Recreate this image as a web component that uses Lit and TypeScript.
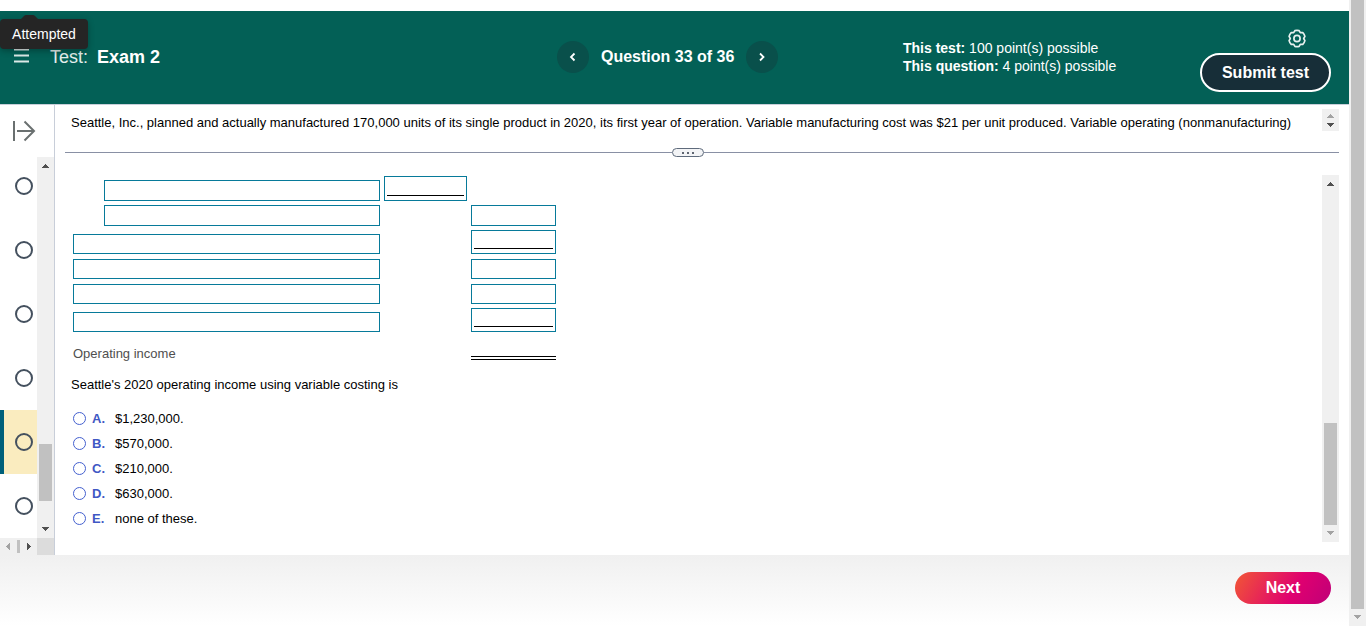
import { LitElement, html, css, svg } from "lit";
import { customElement, property, state } from "lit/decorators.js";
import { classMap } from "lit/directives/class-map.js";

const arrows: Record<string, string> = {
  up: "M1 7h7v-1h-1v-1h-1v-1h-1v-1h-1v1h-1v1h-1v1h-1z",
  down: "M1 2h7v1h-1v1h-1v1h-1v1h-1v-1h-1v-1h-1v-1h-1z",
  left: "M6 1v7h-1v-1h-1v-1h-1v-1h-1v-1h1v-1h1v-1h1v-1z",
  right: "M3 1v7h1v-1h1v-1h1v-1h1v-1h-1v-1h-1v-1h-1v-1z",
};

const arrow = (dir: string, dim = false) => html`
  <svg class=${dim ? "arrow dim" : "arrow"} width="9" height="9" viewBox="0 0 9 9" aria-hidden="true">
    ${svg`<path d=${arrows[dir]} fill="currentColor" shape-rendering="crispEdges" />`}
  </svg>
`;

/** Vertical scroll track: the thumb is placed by the shares of free space above and below it. */
@customElement("scroll-track")
class ScrollTrack extends LitElement {
  @property({ type: Number }) before = 0;
  @property({ type: Number }) thumb = 0;
  @property({ type: Number }) after = 0;
  @property({ type: Boolean }) atStart = false;
  @property({ type: Boolean }) atEnd = false;
  @property({ type: Boolean }) noStart = false;

  static styles = css`
    :host {
      display: flex;
      flex-direction: column;
      flex: none;
      width: 17px;
      background: #f0f0f0;
      color: #505050;
    }
    .cap {
      flex: none;
      height: 17px;
      display: flex;
      align-items: center;
      justify-content: center;
    }
    .rail {
      flex: 1;
      display: flex;
      flex-direction: column;
      min-height: 0;
    }
    .thumb {
      margin: 0 2px;
      background: #c1c1c1;
    }
    .dim {
      color: #a3a3a3;
    }
  `;

  render() {
    return html`
      ${this.noStart ? "" : html`<div class="cap">${arrow("up", this.atStart)}</div>`}
      <div class="rail">
        <div style="flex:${this.before}"></div>
        <div class="thumb" style="flex:${this.thumb}"></div>
        <div style="flex:${this.after}"></div>
      </div>
      <div class="cap">${arrow("down", this.atEnd)}</div>
    `;
  }
}

@customElement("app-root")
class AppRoot extends LitElement {
  @state() private current = 4;
  @state() private answer = "";

  private choices = [
    ["A", "$1,230,000."],
    ["B", "$570,000."],
    ["C", "$210,000."],
    ["D", "$630,000."],
    ["E", "none of these."],
  ];

  // indent: label box is inset; col: which amount column is filled; rule: amount ends in a subtotal line
  private rows = [
    { indent: true, col: 1, rule: true, h: "tall" },
    { indent: true, col: 2, rule: false, h: "mid" },
    { indent: false, col: 2, rule: true, h: "" },
    { indent: false, col: 2, rule: false, h: "" },
    { indent: false, col: 2, rule: false, h: "" },
    { indent: false, col: 2, rule: true, h: "" },
  ];

  static styles = css`
    :host {
      display: flex;
      height: 100vh;
      background: #fff;
      color: #000;
      font: 13px/18px "Liberation Sans", Arial, sans-serif;
    }
    * {
      box-sizing: border-box;
    }
    button {
      font: inherit;
      color: inherit;
      background: none;
      border: 0;
      padding: 0;
      cursor: pointer;
    }
    .page {
      flex: 1;
      min-width: 0;
      display: flex;
      flex-direction: column;
      padding-top: 11px;
    }

    .header {
      position: relative;
      flex: none;
      display: grid;
      grid-template-columns: 557fr 346fr 297fr 149fr;
      height: 94px;
      background: #036056;
      border-bottom: 1px solid #c8ced9;
      color: #fff;
      font-size: 14px;
      white-space: nowrap;
    }
    .title {
      display: flex;
      align-items: center;
      gap: 21px;
      padding-left: 14px;
      height: 91px;
      font-size: 18px;
    }
    .title h1 {
      margin: 0;
      font-size: 18px;
      font-weight: 400;
      display: flex;
      gap: 9px;
      color: #e4eeec;
    }
    .title strong {
      color: #fff;
    }
    .menu,
    .menu svg,
    .gear svg,
    .collapse svg {
      display: block;
    }
    .tip {
      position: absolute;
      left: 0;
      top: 8px;
      width: 88px;
      height: 30px;
      border-radius: 4px;
      background: #252525;
      text-align: center;
      font-size: 14px;
      line-height: 30px;
      box-shadow: 0 2px 6px rgba(0, 0, 0, 0.3);
    }
    .tip svg {
      position: absolute;
      left: 20px;
      top: -4px;
    }
    .nav {
      display: flex;
      align-items: center;
      gap: 12px;
      height: 91px;
      font-size: 16px;
      font-weight: 700;
    }
    .round {
      width: 32px;
      height: 32px;
      border-radius: 50%;
      background: #09504b;
      display: flex;
      align-items: center;
      justify-content: center;
    }
    .points {
      padding-top: 28px;
    }
    .points div {
      line-height: 18px;
    }
    .actions {
      display: flex;
      flex-direction: column;
      align-items: flex-end;
      gap: 5px;
      padding: 18px 18px 0 0;
    }
    .gear {
      margin-right: 24px;
    }
    .submit {
      width: 131px;
      height: 39px;
      border: 2px solid #fff;
      border-radius: 20px;
      background: #172e38;
      font-size: 16px;
      font-weight: 700;
    }

    .main {
      flex: 1;
      min-height: 0;
      display: flex;
    }
    .side {
      flex: none;
      width: 55px;
      display: flex;
      flex-direction: column;
      border-right: 1px solid #c8ced9;
    }
    .collapse {
      flex: none;
      height: 52px;
      padding-left: 12px;
      text-align: left;
    }
    .list {
      flex: 1;
      min-height: 0;
      display: flex;
    }
    .items {
      flex: 1;
      display: flex;
      flex-direction: column;
      justify-content: flex-end;
      overflow: hidden;
    }
    .item {
      flex: none;
      height: 64px;
      display: flex;
      align-items: center;
      justify-content: flex-end;
      padding-right: 4px;
    }
    .item.on {
      background: #faecbf;
      border-left: 4px solid #00607a;
    }
    .dot {
      width: 18px;
      height: 18px;
      border: 2px solid #44505e;
      border-radius: 50%;
    }
    .hbar {
      flex: none;
      display: flex;
      height: 17px;
      background: #dcdcdc;
      color: #505050;
    }
    .hrail {
      width: 37px;
      display: flex;
      align-items: center;
      justify-content: space-between;
      padding: 0 4px;
      background: #f0f0f0;
    }
    .hthumb {
      width: 3px;
      height: 13px;
      background: #c1c1c1;
    }
    .dim {
      color: #a3a3a3;
    }

    .content {
      flex: 1;
      min-width: 0;
      display: flex;
      flex-direction: column;
      padding: 4px 10px 13px;
    }
    .stem {
      flex: none;
      display: flex;
      justify-content: space-between;
      height: 39px;
      padding-left: 6px;
    }
    .stem p {
      margin: 5px 0 0;
      height: 18px;
      overflow: hidden;
    }
    .spin {
      flex: none;
      width: 17px;
      height: 22px;
      display: flex;
      flex-direction: column;
      align-items: center;
      justify-content: center;
      gap: 1px;
      background: #f0f0f0;
      color: #505050;
    }
    .split {
      flex: none;
      display: flex;
      align-items: center;
      height: 9px;
    }
    .line {
      height: 1px;
      background: #8990a4;
      flex: 22;
    }
    .line.rest {
      flex: 23;
    }
    .grip {
      width: 32px;
      height: 9px;
      border: 1px solid #5f6b7c;
      border-radius: 5px;
      background: #f3f4f6;
      display: flex;
      align-items: center;
      justify-content: center;
      gap: 3px;
    }
    .grip i {
      width: 2px;
      height: 2px;
      background: #5f6672;
    }
    .work {
      flex: 1;
      min-height: 0;
      display: flex;
      justify-content: space-between;
      padding-top: 18px;
    }
    .body {
      padding-left: 4px;
      margin-top: -3px;
    }
    table {
      border-collapse: separate;
      border-spacing: 4px;
      table-layout: fixed;
      width: 491px;
    }
    .c1 {
      width: 307px;
    }
    .c2 {
      width: 83px;
    }
    td,
    th {
      padding: 0;
      height: 21px;
      vertical-align: bottom;
      font-weight: 400;
      text-align: left;
      line-height: 0;
    }
    .cell {
      display: block;
      width: 100%;
      height: 20px;
      border: 1px solid #077a9a;
    }
    .cell input {
      display: block;
      width: 100%;
      height: 18px;
      border: 0;
      padding: 0 2px;
      background: none;
      font: inherit;
      outline: none;
    }
    .indent {
      padding-left: 31px;
    }
    .tall .cell,
    .mid .cell {
      height: 21px;
    }
    .cell.rule {
      height: 24px;
      padding: 0 2px;
    }
    .tall .cell.rule {
      height: 25px;
    }
    .cell.rule input {
      border-bottom: 1px solid #000;
    }
    .tall .cell.rule input {
      height: 19px;
    }
    .total th {
      height: 24px;
      line-height: 12px;
      padding-top: 12px;
      color: #4f4f4f;
    }
    .total .sum {
      border-bottom: 4px double #000;
    }
    .ask {
      margin: 12px 0 0 2px;
    }
    fieldset {
      border: 0;
      margin: 12px 0 0;
      padding: 0 0 0 4px;
    }
    .choice {
      display: flex;
      align-items: center;
      height: 25px;
    }
    .choice input {
      appearance: none;
      width: 13px;
      height: 13px;
      margin: 0 6px 0 0;
      border: 1px solid #4460cf;
      border-radius: 50%;
    }
    .choice input:checked {
      background: radial-gradient(#4460cf 40%, transparent 45%);
    }
    .letter {
      width: 23px;
      color: #3f58c4;
      font-weight: 700;
    }
    .footer {
      flex: none;
      height: 71px;
      display: flex;
      justify-content: flex-end;
      padding: 17px 18px 0 0;
      background: linear-gradient(#f0f0f0, #fff);
    }
    .next {
      width: 96px;
      height: 32px;
      border-radius: 16px;
      color: #fff;
      font-size: 16px;
      font-weight: 700;
      background: linear-gradient(120deg, #f0503a 5%, #df0070 62%, #bf0078);
    }
  `;

  private amount(row: { col: number; rule: boolean }, col: number, n: number) {
    if (row.col !== col) return html`<td></td>`;
    return html`<td>
      <span class=${classMap({ cell: true, rule: row.rule })}><input type="text" aria-label="Amount ${n}" /></span>
    </td>`;
  }

  render() {
    return html`
      <div class="page">
        <header class="header">
          <div class="title">
            <button class="menu" aria-label="Menu">
              <svg width="15" height="15" viewBox="0 0 15 15">
                <path d="M0 .5h15M0 6.500h15M0 12.500h15" stroke="#dce9e7" stroke-width="2" />
              </svg>
            </button>
            <h1><span>Test:</span><strong>Exam 2</strong></h1>
          </div>
          <nav class="nav">
            <button class="round" aria-label="Previous question">
              <svg width="8" height="10" viewBox="0 0 8 10">
                <path d="M5.500 1.500 2 5l3.500 3.500" fill="none" stroke="#fff" stroke-width="1.8" />
              </svg>
            </button>
            <span>Question 33 of 36</span>
            <button class="round" aria-label="Next question">
              <svg width="8" height="10" viewBox="0 0 8 10">
                <path d="M2 1.500 5.500 5 2 8.500" fill="none" stroke="#fff" stroke-width="1.8" />
              </svg>
            </button>
          </nav>
          <div class="points">
            <div><b>This test:</b> 100 point(s) possible</div>
            <div><b>This question:</b> 4 point(s) possible</div>
          </div>
          <div class="actions">
            <button class="gear" aria-label="Settings">
              <svg width="20" height="19" viewBox="0 0 20 19" fill="none" stroke="#e8f1ef" stroke-width="1.7" stroke-linejoin="round">
                <path d="M7.9 1.6Q10 1 12.1 1.6L13.3 3.7L15.8 3.7Q17.4 5.3 17.9 7.4L16.7 9.5L17.9 11.6Q17.4 13.7 15.8 15.3L13.3 15.3L12.1 17.4Q10 18 7.9 17.4L6.7 15.3L4.2 15.3Q2.6 13.7 2.1 11.6L3.3 9.5L2.1 7.4Q2.6 5.3 4.2 3.7L6.7 3.7Z" />
                <circle cx="10" cy="9.5" r="3.1" />
              </svg>
            </button>
            <button class="submit">Submit test</button>
          </div>
          <div class="tip" role="tooltip">
            <svg width="19" height="5" viewBox="0 0 19 5" aria-hidden="true">
              <path d="M0 5 4 1Q5 0 6 0h7q1 0 2 1l4 4z" fill="#252525" />
            </svg>
            Attempted
          </div>
        </header>

        <div class="main">
          <aside class="side">
            <button class="collapse" aria-label="Expand question list">
              <svg width="24" height="22" viewBox="0 0 24 22" fill="none" stroke="#6a7070" stroke-width="2">
                <path d="M2 1v20M5 11h17M12.500 1.500 22 11l-9.500 9.500" />
              </svg>
            </button>
            <div class="list">
              <div class="items">
                ${[0, 1, 2, 3, 4, 5].map(
                  (i) => html`<button
                    class=${classMap({ item: true, on: i === this.current })}
                    aria-label="Question ${29 + i}"
                    @click=${() => (this.current = i)}
                  >
                    <span class="dot"></span>
                  </button>`
                )}
              </div>
              <scroll-track .before=${270} .thumb=${57} .after=${20}></scroll-track>
            </div>
            <div class="hbar">
              <div class="hrail">${arrow("left", true)}<span class="hthumb"></span>${arrow("right")}</div>
            </div>
          </aside>

          <main class="content">
            <div class="stem">
              <p>
                Seattle, Inc., planned and actually manufactured 170,000 units of its single product in 2020, its first
                year of operation. Variable manufacturing cost was $21 per unit produced. Variable operating
                (nonmanufacturing)
              </p>
              <div class="spin">${arrow("up", true)}${arrow("down")}</div>
            </div>
            <div class="split">
              <span class="line"></span>
              <button class="grip" aria-label="Resize"><i></i><i></i><i></i></button>
              <span class="line rest"></span>
            </div>
            <div class="work">
              <div class="body">
                <table>
                  <colgroup>
                    <col class="c1" />
                    <col class="c2" />
                    <col />
                  </colgroup>
                  <tbody>
                    ${this.rows.map(
                      (r, n) => html`<tr class=${r.h}>
                        <td class=${r.indent ? "indent" : ""}>
                          <span class="cell"><input type="text" aria-label="Line item ${n + 1}" /></span>
                        </td>
                        ${this.amount(r, 1, n + 1)} ${this.amount(r, 2, n + 1)}
                      </tr>`
                    )}
                    <tr class="total">
                      <th scope="row">Operating income</th>
                      <td></td>
                      <td class="sum"></td>
                    </tr>
                  </tbody>
                </table>
                <p class="ask">Seattle's 2020 operating income using variable costing is</p>
                <fieldset aria-label="Answer choices">
                  ${this.choices.map(
                    ([key, text]) => html`<label class="choice">
                      <input
                        type="radio"
                        name="answer"
                        .checked=${this.answer === key}
                        @change=${() => (this.answer = key)}
                      />
                      <span class="letter">${key}.</span>
                      <span>${text}</span>
                    </label>`
                  )}
                </fieldset>
              </div>
              <scroll-track .before=${231} .thumb=${102} .after=${0} .atEnd=${true}></scroll-track>
            </div>
          </main>
        </div>

        <footer class="footer"><button class="next">Next</button></footer>
      </div>
      <scroll-track .before=${0} .thumb=${609} .after=${0} .noStart=${true} .atEnd=${true}></scroll-track>
    `;
  }
}
